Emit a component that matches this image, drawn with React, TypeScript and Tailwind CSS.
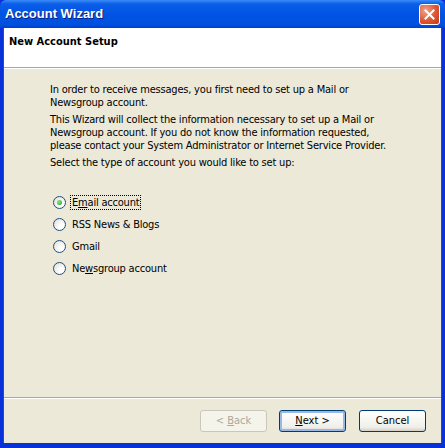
import React, { useState } from "react";

const font = "font-['Tahoma','DejaVu_Sans_Condensed','Liberation_Sans',sans-serif]";

type Option = { id: string; label: React.ReactNode };

const options: Option[] = [
  {
    id: "email",
    label: (
      <>
        E<span className="underline">m</span>ail account
      </>
    ),
  },
  { id: "rss", label: "RSS News & Blogs" },
  { id: "gmail", label: "Gmail" },
  {
    id: "news",
    label: (
      <>
        Ne<span className="underline">w</span>sgroup account
      </>
    ),
  },
];

function Radio({ checked }: { checked: boolean }) {
  return (
    <span className="flex h-[13px] w-[13px] shrink-0 items-center justify-center rounded-full border border-[#1c5180] bg-[radial-gradient(circle_at_70%_70%,#ffffff_20%,#dcdad5_100%)]">
      {checked && (
        <span className="h-[5px] w-[5px] rounded-full bg-[radial-gradient(circle_at_35%_35%,#8ae38a,#21a121)]" />
      )}
    </span>
  );
}

function XpButton({
  children,
  disabled,
  focused,
}: {
  children: React.ReactNode;
  disabled?: boolean;
  focused?: boolean;
}) {
  return (
    <button
      type="button"
      className={`flex h-[22px] w-[67px] items-center justify-center rounded-[3px] border text-[11px] ${
        disabled
          ? "border-[#c9c7ba] bg-[#f5f4ea] text-[#aca899]"
          : "border-[#003c74] bg-[linear-gradient(to_bottom,#ffffff,#f0f0ea_80%,#d6d0c5)] text-black"
      } ${focused ? "shadow-[inset_0_0_0_2px_#98b8ea]" : ""}`}
    >
      <span>{children}</span>
    </button>
  );
}

export default function App() {
  const [selected, setSelected] = useState("email");

  return (
    <div className={`flex h-[448px] w-[445px] flex-col bg-[#0831d9] ${font}`}>
      {/* Title bar */}
      <div className="flex h-[28px] items-center justify-between rounded-t-[6px] bg-[linear-gradient(to_bottom,#3c8cf8_0%,#0a5ee8_14%,#0054e3_50%,#0050de_88%,#003fd0_100%)] pl-[5px] pr-[5px]">
        <span className="font-['Liberation_Sans',sans-serif] text-[13px] font-bold text-white [text-shadow:1px_1px_0_#0a1f7d]">
          Account Wizard
        </span>
        <span className="flex h-[21px] w-[21px] items-center justify-center rounded-[3px] border border-white bg-[radial-gradient(circle_at_30%_30%,#f0a48c,#e0552e_55%,#c13a14)]">
          <svg width="11" height="11" viewBox="0 0 11 11">
            <path d="M1.5 1.5 L9.5 9.5 M9.5 1.5 L1.5 9.5" stroke="white" strokeWidth="2" strokeLinecap="square" />
          </svg>
        </span>
      </div>

      {/* Window body */}
      <div className="mx-[3px] mb-[5px] flex flex-1 flex-col border-l border-r border-[#0055e5] bg-[#ece9d8]">
        <div className="h-[40px] border-b border-[#aca899] bg-white px-[5px] pt-[6px] text-[11px] font-bold text-black">
          New Account Setup
        </div>
        <div className="h-px bg-white" />

        <div className="flex flex-1 flex-col pl-[46px] pr-[30px] pt-[14px] text-[11px] leading-[13px] tracking-[-0.2px] text-black">
          <p className="pr-[40px]">In order to receive messages, you first need to set up a Mail or Newsgroup account.</p>
          <p className="mt-[4px] pr-[10px]">
            This Wizard will collect the information necessary to set up a Mail or Newsgroup account. If you
            do not know the information requested, please contact your System Administrator or Internet
            Service Provider.
          </p>
          <p className="mt-[4px]">Select the type of account you would like to set up:</p>

          <div className="mt-[27px] flex flex-col gap-[9px] pl-[3px]">
            {options.map((o) => (
              <label
                key={o.id}
                className="flex h-[13px] cursor-default items-center gap-[5px]"
                onClick={() => setSelected(o.id)}
              >
                <Radio checked={selected === o.id} />
                <span
                  className={`px-px ${
                    o.id === "email" ? "outline-1 outline-dotted outline-black" : ""
                  }`}
                >
                  {o.label}
                </span>
              </label>
            ))}
          </div>
        </div>

        <div className="border-t border-[#aca899]" />
        <div className="flex h-[45px] items-center justify-end gap-[12px] border-t border-white pr-[15px]">
          <XpButton disabled>
            &lt; <span className="underline">B</span>ack
          </XpButton>
          <div className="mr-px">
            <XpButton focused>
              <span className="underline">N</span>ext &gt;
            </XpButton>
          </div>
          <XpButton>Cancel</XpButton>
        </div>
      </div>
    </div>
  );
}
